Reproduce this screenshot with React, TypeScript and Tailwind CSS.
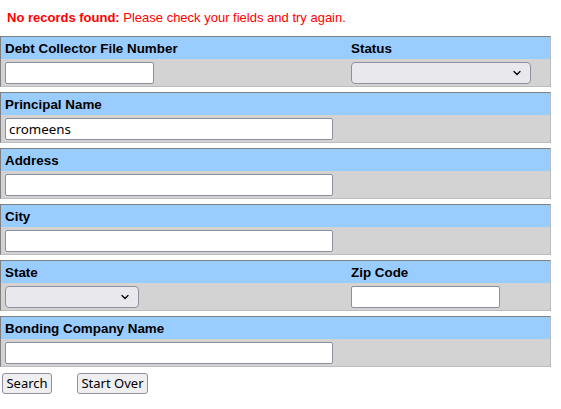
import { ChevronDown } from "lucide-react";

const inputCls =
    "h-[22px] bg-white border border-[#8f8f9d] rounded-[2px] px-[3px] text-[13.33px] text-black outline-none";

function TextBox({ width, value = "" }: { width: string; value?: string }) {
    return <input type="text" defaultValue={value} className={`${inputCls} ${width}`} style={{ fontFamily: "'Noto Sans', sans-serif" }} />;
}

function SelectBox({ width }: { width: string }) {
    return (
        <div className={`h-[22px] flex items-center justify-end pr-[7px] bg-[#e9e9ed] border border-[#8f8f9d] rounded-[4px] ${width}`}>
            <ChevronDown className="w-[12px] h-[12px] text-black" strokeWidth={2.5} />
        </div>
    );
}

function Section({
    left,
    right,
    leftField,
    rightField,
}: {
    left: string;
    right?: string;
    leftField: React.ReactNode;
    rightField?: React.ReactNode;
}) {
    return (
        <div className="w-[551px] border-t border-l border-t-[#808080] border-l-[#808080] border-r border-b border-r-[#bcbcbc] border-b-[#bcbcbc]">
            {/* Header row */}
            <div className="grid grid-cols-[346px_1fr] h-[22px] bg-[#99ccff] items-center pt-[2px] text-[13.4px] font-bold text-black">
                <div className="pl-[4px]">{left}</div>
                <div className="pl-[4px]">{right}</div>
            </div>
            {/* Field row */}
            <div className="grid grid-cols-[346px_1fr] h-[27px] bg-[#d3d3d3] pt-[3px] items-start">
                <div className="pl-[4px] flex">{leftField}</div>
                <div className="pl-[4px] flex">{rightField}</div>
            </div>
        </div>
    );
}

export default function App() {
    return (
        <div className="w-[561px] h-[409px] bg-white" style={{ fontFamily: "'Liberation Sans', Arial, sans-serif" }}>
            <div className="pt-[8px] pl-[7px] h-[36px] text-[13px] text-[#ff0000]">
                <span className="font-bold">No records found:</span> Please check your fields and try again.
            </div>

            <div className="flex flex-col gap-[5px]">
                <Section
                    left="Debt Collector File Number"
                    right="Status"
                    leftField={<TextBox width="w-[149px]" />}
                    rightField={<SelectBox width="w-[180px]" />}
                />
                <Section left="Principal Name" leftField={<TextBox width="w-[328px]" value="cromeens" />} />
                <Section left="Address" leftField={<TextBox width="w-[328px]" />} />
                <Section left="City" leftField={<TextBox width="w-[328px]" />} />
                <Section
                    left="State"
                    right="Zip Code"
                    leftField={<SelectBox width="w-[134px]" />}
                    rightField={<TextBox width="w-[149px]" />}
                />
                <Section left="Bonding Company Name" leftField={<TextBox width="w-[328px]" />} />
            </div>

            <div className="flex gap-[25px] pl-[2px] pt-[6px]" style={{ fontFamily: "'Noto Sans', sans-serif" }}>
                <button className="h-[21px] w-[50px] bg-[#efeff2] border border-[#8f8f9d] rounded-[3px] text-[13px] leading-none text-black">
                    Search
                </button>
                <button className="h-[21px] w-[71px] bg-[#efeff2] border border-[#8f8f9d] rounded-[3px] text-[13px] leading-none text-black">
                    Start Over
                </button>
            </div>
        </div>
    );
}
